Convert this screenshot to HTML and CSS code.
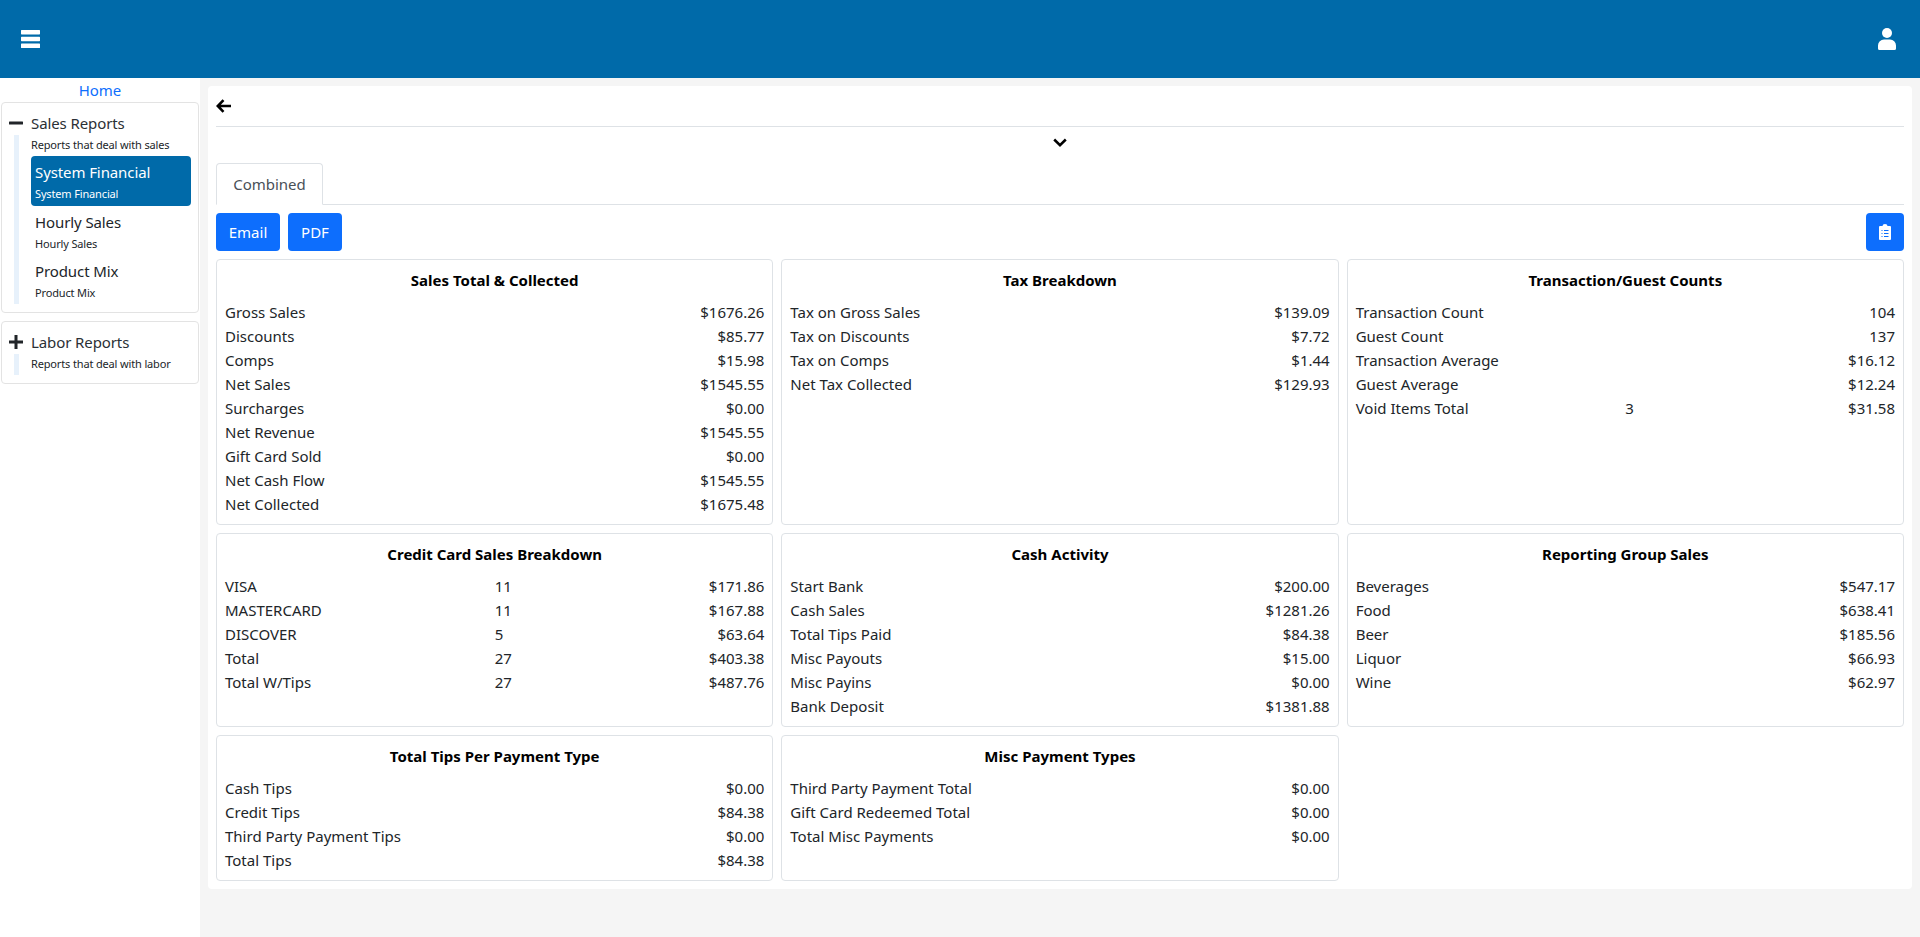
FILE: index.html
```html
<!DOCTYPE html>
<html lang="en">
<head>
<meta charset="utf-8">
<title>Reports</title>
<link rel="stylesheet" href="styles.css">
</head>
<body>
<header class="topbar">
  <svg class="ico-menu" viewBox="0 0 19 18"><path fill="currentColor" d="M.6 0h17.800a.6.6 0 0 1 .6.6v3.200a.6.6 0 0 1-.6.6H.6a.6.6 0 0 1-.6-.6V.6A.6.6 0 0 1 .6 0zm0 6.800h17.800a.6.6 0 0 1 .6.6v3.200a.6.6 0 0 1-.6.6H.6a.6.6 0 0 1-.6-.6V7.400a.6.6 0 0 1 .6-.6zm0 6.800h17.800a.6.6 0 0 1 .6.6v3.200a.6.6 0 0 1-.6.6H.6a.6.6 0 0 1-.6-.6v-3.200a.6.6 0 0 1 .6-.6z"/></svg>
  <svg class="ico-user" viewBox="0 0 18 22"><circle cx="9" cy="5" r="5" fill="currentColor"/><path fill="currentColor" d="M6 11.500h6a6 6 0 0 1 6 6v3a1.500 1.500 0 0 1-1.500 1.500h-15A1.500 1.500 0 0 1 0 20.500v-3a6 6 0 0 1 6-6z"/></svg>
</header>
<div class="shell">
  <aside class="sidebar">
    <a class="home" href="#">Home</a>
    <section class="group">
      <div class="group-head">
        <svg class="ico-pm" viewBox="0 0 14 14"><rect x="0" y="5.500" width="14" height="3" rx="0.500"/></svg>
        <span class="group-title">Sales Reports</span>
      </div>
      <div class="group-body">
        <div class="group-sub">Reports that deal with sales</div>
        <div class="item active"><div class="item-title">System Financial</div><div class="item-sub">System Financial</div></div>
        <div class="item"><div class="item-title">Hourly Sales</div><div class="item-sub">Hourly Sales</div></div>
        <div class="item"><div class="item-title">Product Mix</div><div class="item-sub">Product Mix</div></div>
      </div>
    </section>
    <section class="group">
      <div class="group-head">
        <svg class="ico-pm" viewBox="0 0 14 14"><path d="M5.500 0h3v5.500H14v3H8.500V14h-3V8.500H0v-3h5.500z"/></svg>
        <span class="group-title">Labor Reports</span>
      </div>
      <div class="group-body">
        <div class="group-sub">Reports that deal with labor</div>
      </div>
    </section>
  </aside>
  <main class="main">
    <div class="panel">
      <div class="back-row">
        <svg class="ico-back" viewBox="0 0 15 14"><path d="M7.500 1.200 1.800 7l5.700 5.800M2 7h13" fill="none" stroke="currentColor" stroke-width="2.600"/></svg>
      </div>
      <div class="chevron-row">
        <svg class="ico-chev" viewBox="0 0 14 9"><path d="M1.200 1.500 7 7.200l5.800-5.700" fill="none" stroke="currentColor" stroke-width="2.500"/></svg>
      </div>
      <div class="tabs"><div class="tab">Combined</div></div>
      <div class="actions">
        <button class="btn btn-email">Email</button>
        <button class="btn btn-pdf">PDF</button>
        <button class="btn btn-icon">
          <svg class="ico-clip" viewBox="0 0 12 16"><path fill="currentColor" d="M1 2h2.500a2.500 2 0 0 1 5 0H11a1 1 0 0 1 1 1v12a1 1 0 0 1-1 1H1a1 1 0 0 1-1-1V3a1 1 0 0 1 1-1z"/><path stroke="#0d6efd" stroke-width="1" d="M2.500 6.500h1M5 6.500h4.500M2.500 9.500h1M5 9.500h4.500M2.500 12.500h1M5 12.500h4.500"/></svg>
        </button>
      </div>
      <div class="cards">
        <div class="card">
          <h6>Sales Total &amp; Collected</h6>
          <div class="row"><span>Gross Sales</span><span class="val">$1676.26</span></div>
          <div class="row"><span>Discounts</span><span class="val">$85.77</span></div>
          <div class="row"><span>Comps</span><span class="val">$15.98</span></div>
          <div class="row"><span>Net Sales</span><span class="val">$1545.55</span></div>
          <div class="row"><span>Surcharges</span><span class="val">$0.00</span></div>
          <div class="row"><span>Net Revenue</span><span class="val">$1545.55</span></div>
          <div class="row"><span>Gift Card Sold</span><span class="val">$0.00</span></div>
          <div class="row"><span>Net Cash Flow</span><span class="val">$1545.55</span></div>
          <div class="row"><span>Net Collected</span><span class="val">$1675.48</span></div>
        </div>
        <div class="card">
          <h6>Tax Breakdown</h6>
          <div class="row"><span>Tax on Gross Sales</span><span class="val">$139.09</span></div>
          <div class="row"><span>Tax on Discounts</span><span class="val">$7.72</span></div>
          <div class="row"><span>Tax on Comps</span><span class="val">$1.44</span></div>
          <div class="row"><span>Net Tax Collected</span><span class="val">$129.93</span></div>
        </div>
        <div class="card">
          <h6>Transaction/Guest Counts</h6>
          <div class="row"><span>Transaction Count</span><span class="val">104</span></div>
          <div class="row"><span>Guest Count</span><span class="val">137</span></div>
          <div class="row"><span>Transaction Average</span><span class="val">$16.12</span></div>
          <div class="row"><span>Guest Average</span><span class="val">$12.24</span></div>
          <div class="row"><span>Void Items Total</span><span class="mid">3</span><span class="val">$31.58</span></div>
        </div>
        <div class="card">
          <h6>Credit Card Sales Breakdown</h6>
          <div class="row"><span>VISA</span><span class="mid">11</span><span class="val">$171.86</span></div>
          <div class="row"><span>MASTERCARD</span><span class="mid">11</span><span class="val">$167.88</span></div>
          <div class="row"><span>DISCOVER</span><span class="mid">5</span><span class="val">$63.64</span></div>
          <div class="row"><span>Total</span><span class="mid">27</span><span class="val">$403.38</span></div>
          <div class="row"><span>Total W/Tips</span><span class="mid">27</span><span class="val">$487.76</span></div>
        </div>
        <div class="card">
          <h6>Cash Activity</h6>
          <div class="row"><span>Start Bank</span><span class="val">$200.00</span></div>
          <div class="row"><span>Cash Sales</span><span class="val">$1281.26</span></div>
          <div class="row"><span>Total Tips Paid</span><span class="val">$84.38</span></div>
          <div class="row"><span>Misc Payouts</span><span class="val">$15.00</span></div>
          <div class="row"><span>Misc Payins</span><span class="val">$0.00</span></div>
          <div class="row"><span>Bank Deposit</span><span class="val">$1381.88</span></div>
        </div>
        <div class="card">
          <h6>Reporting Group Sales</h6>
          <div class="row"><span>Beverages</span><span class="val">$547.17</span></div>
          <div class="row"><span>Food</span><span class="val">$638.41</span></div>
          <div class="row"><span>Beer</span><span class="val">$185.56</span></div>
          <div class="row"><span>Liquor</span><span class="val">$66.93</span></div>
          <div class="row"><span>Wine</span><span class="val">$62.97</span></div>
        </div>
        <div class="card">
          <h6>Total Tips Per Payment Type</h6>
          <div class="row"><span>Cash Tips</span><span class="val">$0.00</span></div>
          <div class="row"><span>Credit Tips</span><span class="val">$84.38</span></div>
          <div class="row"><span>Third Party Payment Tips</span><span class="val">$0.00</span></div>
          <div class="row"><span>Total Tips</span><span class="val">$84.38</span></div>
        </div>
        <div class="card">
          <h6>Misc Payment Types</h6>
          <div class="row"><span>Third Party Payment Total</span><span class="val">$0.00</span></div>
          <div class="row"><span>Gift Card Redeemed Total</span><span class="val">$0.00</span></div>
          <div class="row"><span>Total Misc Payments</span><span class="val">$0.00</span></div>
        </div>
      </div>
    </div>
  </main>
</div>
</body>
</html>
```
FILE: styles.css
```css
* { box-sizing: border-box; }
html, body { margin: 0; height: 100%; }
body { font-family: "Noto Sans", "Open Sans", sans-serif; font-size: 15px; line-height: 24px; color: #212529; background: #f5f5f5; height: 937px; overflow: hidden; }
.topbar { height: 78px; background: #006aa9; color: #fff; display: flex; align-items: center; justify-content: space-between; padding: 0 24px 0 21px; }
.ico-menu { width: 19px; height: 18px; }
.ico-user { width: 18px; height: 22px; }
.shell { display: flex; height: 859px; }
.sidebar { width: 200px; background: #fff; padding: 0 1px; flex: none; }
.home { display: block; text-align: center; color: #0d6efd; text-decoration: none; height: 24px; line-height: 24px; }
.group { border: 1px solid #e3e3e3; border-radius: 4px; padding: 8px 7px; margin-bottom: 8px; }
.group-head { display: flex; align-items: center; height: 24px; }
.ico-pm { width: 14px; height: 14px; fill: #212529; margin-right: 8px; flex: none; }
.group-title { font-size: 15px; line-height: 24px; letter-spacing: -0.1px; color: #2b3035; }
.group-body { margin-left: 5px; border-left: 5px solid #e7f1fb; padding-left: 12px; }
.group-sub { font-size: 11px; line-height: 19px; height: 21px; letter-spacing: -0.15px; }
.item { height: 49px; padding: 3px 4px 0; border-radius: 4px; }
.item.active { background: #006aa9; color: #fff; height: 50px; }
.item-title { font-size: 15px; line-height: 26px; letter-spacing: -0.1px; }
.item-sub { font-size: 11px; line-height: 17px; letter-spacing: -0.15px; }
.main { flex: 1; padding: 8px; min-width: 0; }
.panel { background: #fff; border-radius: 4px; padding: 8px; }
.back-row { height: 33px; border-bottom: 1px solid #dee2e6; display: flex; align-items: flex-start; color: #000; padding-top: 5px; }
.ico-back { width: 15px; height: 14px; }
.chevron-row { height: 36px; display: flex; justify-content: center; color: #000; padding-top: 11px; }
.ico-chev { width: 14px; height: 9px; }
.tabs { border-bottom: 1px solid #dee2e6; height: 42px; display: flex; }
.tab { width: 107px; height: 42px; border: 1px solid #dee2e6; border-bottom-color: #fff; border-radius: 4px 4px 0 0; padding: 8px 16px; color: #495057; text-align: center; background: #fff; }
.actions { display: flex; gap: 8px; padding: 8px 0; }
.btn { background: #0d6efd; color: #fff; border: 0; border-radius: 4px; height: 38px; padding: 0; font: inherit; }
.btn-email { width: 64px; }
.btn-pdf { width: 54px; }
.btn-icon { margin-left: auto; width: 38px; display: flex; align-items: center; justify-content: center; }
.ico-clip { width: 12px; height: 16px; }
.cards { display: grid; grid-template-columns: repeat(3, 1fr); gap: 8px; grid-template-rows: 266px 194px 146px; }
.card { border: 1px solid #dee2e6; border-radius: 4px; padding: 8px; color: #212529; }
.card h6 { margin: 0 0 8px; font-size: 15px; line-height: 24px; font-weight: 700; text-align: center; color: #000; }
.row { display: grid; grid-template-columns: 50% 1fr auto; height: 24px; white-space: nowrap; }
.val { grid-column: 3; text-align: right; }
.mid { text-align: left; }
```
